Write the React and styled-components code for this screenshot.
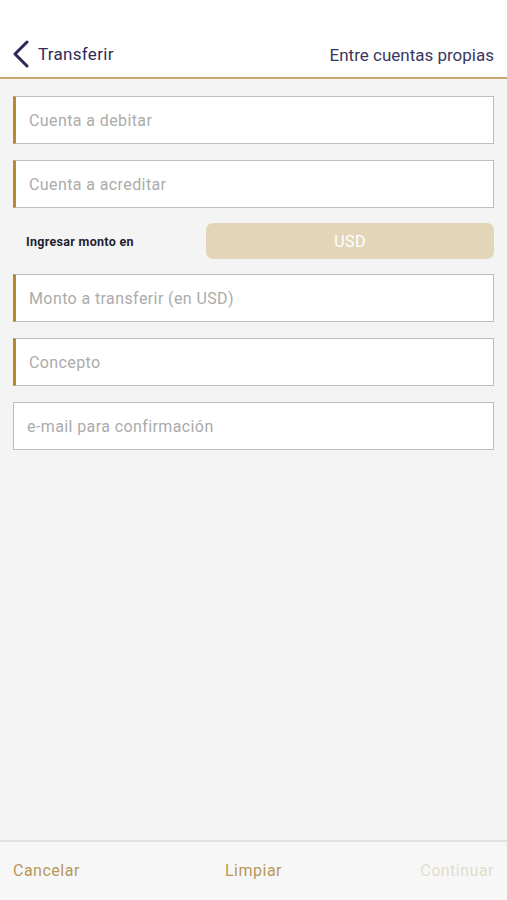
import React from "react";
import styled, { createGlobalStyle } from "styled-components";

const Global = createGlobalStyle`
  html, body { margin: 0; padding: 0; }
  body { font-family: Roboto, "Liberation Sans", sans-serif; background: #f4f4f4; }
  * { box-sizing: border-box; }
`;

const Page = styled.div`
  width: 507px;
  height: 900px;
  display: flex;
  flex-direction: column;
  background: #f4f4f4;
`;

const Header = styled.header`
  height: 79px;
  background: #fff;
  border-bottom: 2px solid #c9a86b;
  display: flex;
  align-items: flex-end;
  justify-content: space-between;
  padding: 0 13px 9px 12px;
`;

const Back = styled.div`
  display: flex;
  align-items: center;
  gap: 8px;
  color: #2e2c57;
  font-size: 17px;
  letter-spacing: 0.3px;
`;

const Title = styled.span`
  color: #3a3860;
  font-size: 17px;
  letter-spacing: 0;
  padding-bottom: 3px;
`;

const Form = styled.main`
  flex: 1;
  display: flex;
  flex-direction: column;
  gap: 16px;
  padding: 17px 13px 0 13px;
`;

const Field = styled.div`
  height: 48px;
  background: #fff;
  border: 1px solid #bdbdbd;
  border-left: ${(p) => (p.$required ? "3px solid #b8892f" : "1px solid #bdbdbd")};
  display: flex;
  align-items: center;
  padding-left: 13px;
  color: #ababab;
  font-size: 16px;
  letter-spacing: 0.4px;
`;

const CurrencyRow = styled.div`
  display: flex;
  align-items: center;
  height: 36px;
  margin: -1px 0 -1px 0;
`;

const CurrencyLabel = styled.span`
  width: 193px;
  padding-left: 13px;
  font-size: 12.5px;
  font-weight: 700;
  letter-spacing: 0.3px;
  color: #1e1e32;
`;

const CurrencyButton = styled.div`
  flex: 1;
  height: 36px;
  border-radius: 7px;
  background: #e3d6b8;
  color: #fff;
  font-size: 16px;
  letter-spacing: 0.4px;
  display: flex;
  align-items: center;
  justify-content: center;
`;

const Footer = styled.footer`
  height: 60px;
  border-top: 2px solid #e2e2e2;
  background: #f7f7f7;
  display: flex;
  align-items: center;
  justify-content: space-between;
  padding: 0 13px 2px 13px;
`;

const FooterButton = styled.span`
  font-size: 16px;
  letter-spacing: 0.5px;
  color: ${(p) => (p.$disabled ? "#e2dccd" : "#b7975c")};
  width: 110px;
  text-align: ${(p) => p.$align || "left"};
`;

export default function App() {
  return (
    <Page>
      <Global />
      <Header>
        <Back>
          <svg width="18" height="28" viewBox="0 0 18 28">
            <path d="M15 2 L3 14 L15 26" fill="none" stroke="#2a2856" strokeWidth="3" strokeLinecap="round" strokeLinejoin="round" />
          </svg>
          <span>Transferir</span>
        </Back>
        <Title>Entre cuentas propias</Title>
      </Header>
      <Form>
        <Field $required>Cuenta a debitar</Field>
        <Field $required>Cuenta a acreditar</Field>
        <CurrencyRow>
          <CurrencyLabel>Ingresar monto en</CurrencyLabel>
          <CurrencyButton>USD</CurrencyButton>
        </CurrencyRow>
        <Field $required>Monto a transferir (en USD)</Field>
        <Field $required>Concepto</Field>
        <Field>e-mail para confirmación</Field>
      </Form>
      <Footer>
        <FooterButton>Cancelar</FooterButton>
        <FooterButton $align="center">Limpiar</FooterButton>
        <FooterButton $align="right" $disabled>Continuar</FooterButton>
      </Footer>
    </Page>
  );
}
